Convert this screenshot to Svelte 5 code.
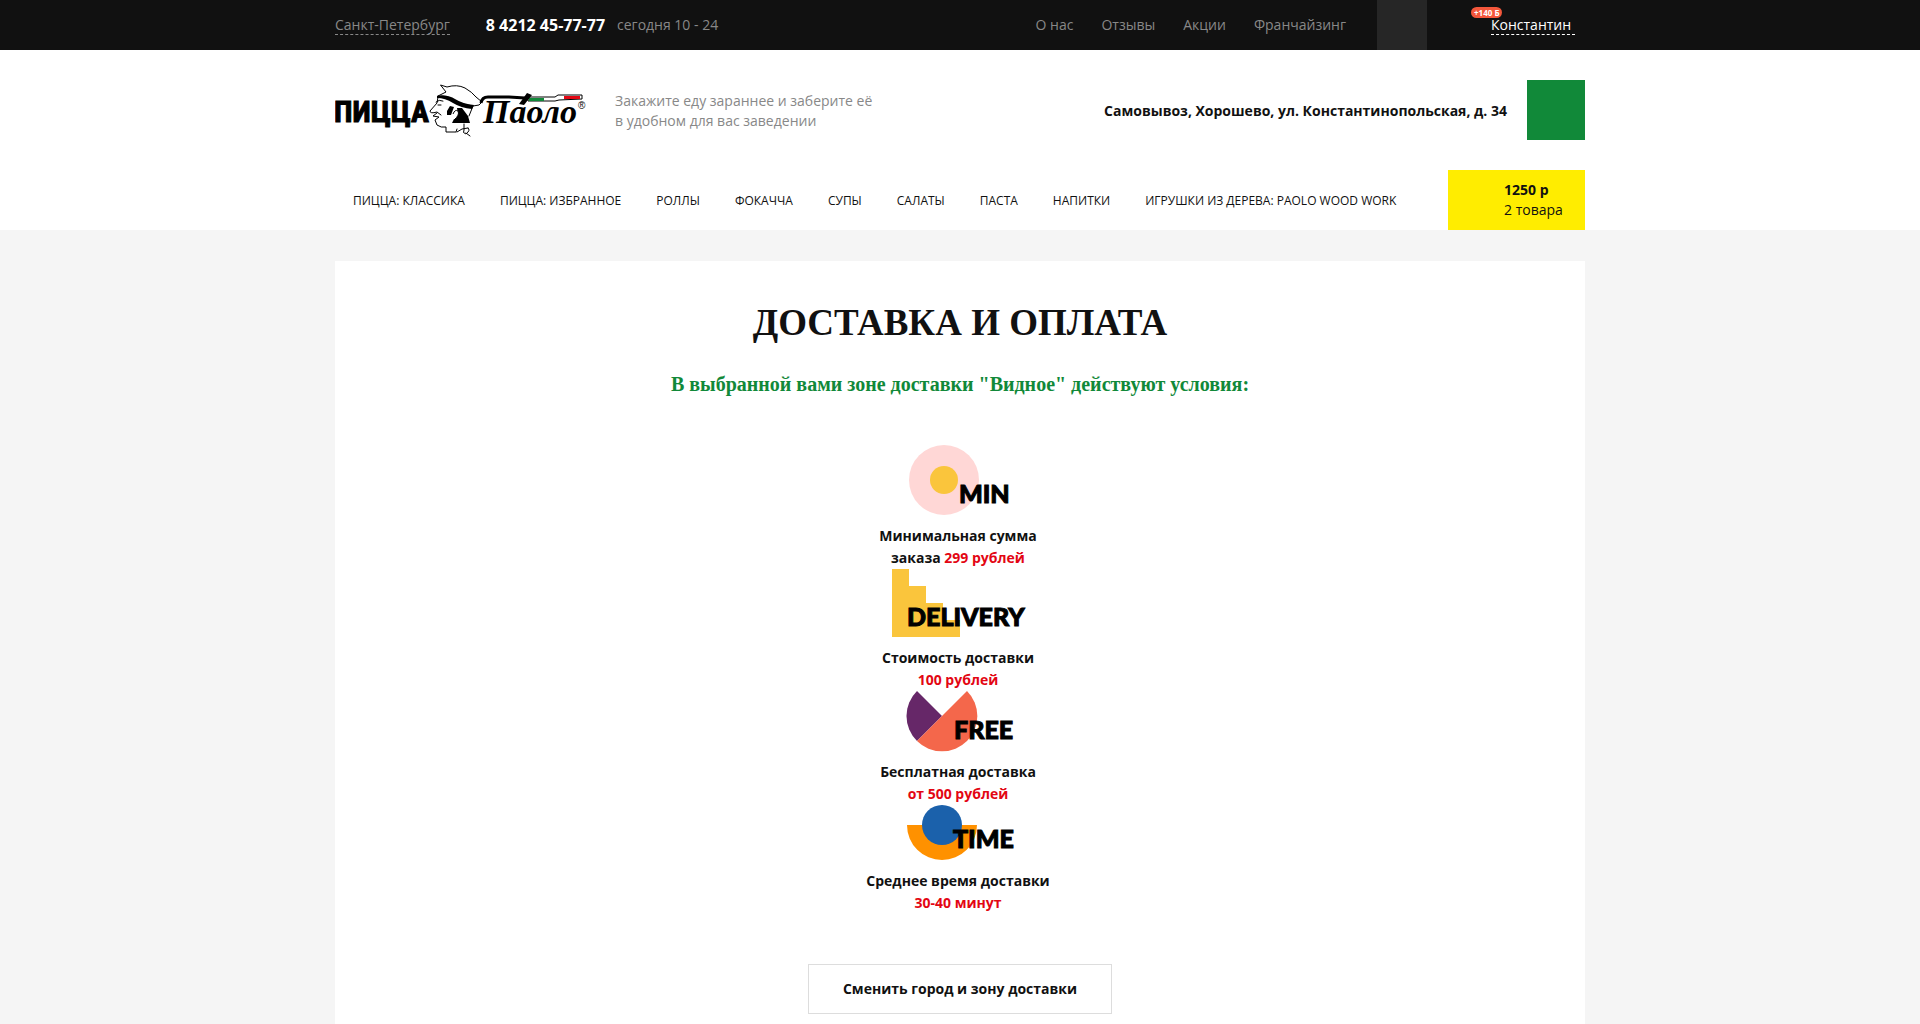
<script>
  const topLinks = ['О нас', 'Отзывы', 'Акции', 'Франчайзинг'];
  const categories = [
    'Пицца: классика', 'Пицца: избранное', 'Роллы', 'Фокачча', 'Супы',
    'Салаты', 'Паста', 'Напитки', 'Игрушки из дерева: Paolo Wood Work'
  ];
</script>

<div class="page">
  <div class="topbar">
    <div class="wrap topbar-row">
      <button class="dashed city">Санкт-Петербург</button>
      <a class="phone" href="tel:84212457777">8 4212 45-77-77</a>
      <span class="hours">сегодня 10 - 24</span>
      <nav class="top-links" aria-label="О компании">
        {#each topLinks as link}
          <a href="#top">{link}</a>
        {/each}
      </nav>
      <button class="search" aria-label="Поиск"></button>
      <div class="user">
        <a class="dashed user-name" href="#profile">Константин</a>
        <span class="bonus">+140 Б</span>
      </div>
    </div>
  </div>

  <header class="header">
    <div class="wrap brand-row">
      <a class="logo" href="#home" aria-label="Пицца Паоло">
        <svg width="252" height="54" viewBox="0 0 252 54">
          <text class="logo-block" x="-1" y="39">ПИЦЦА</text>
          <g fill="none" stroke="#000" stroke-width="1" stroke-linejoin="round" stroke-linecap="round">
            <path fill="#fff" d="M103 13 L111 9 L105.5 2 L112 4 Q122 1 130 5 Q137 9 141 14 L147 19 L144 22 L138 23 Q127 22 119 17 Q112 12 103 13Z" />
            <path d="M103 14 L102 20 L95 28 Q95 31 102 29 L106 32 M102 30 L98 33 L104 34 L100 37 L102 42 Q106 45 111 44 L111 49 L121 49 L122 46" />
            <path d="M101 19 Q104 16 108 18 M103 22 L106 22" />
            <path d="M138 23 L134 33 M122 49 L127 46 L133 45 M129 41 V47 Q127 50 131 51 Q136 47 133 45 M131 50 L135 53" />
          </g>
          <path d="M102 13 Q113 11 120 16 Q128 21 139 22 L137 26 Q126 25 118 20 Q110 15 102 15Z" />
          <path d="M112 28 L115 23 L119 24 L116 32 L112 32Z M122 25 L127 25 L133 33 L135 40 H117 L119 36 Q124 33 122 25Z" />
          <path fill="#fff" stroke="#000" d="M118 31 Q120 26 123 28 Q125 32 119 37" />
          <path fill="none" stroke="#000" stroke-width="3" d="M146 20 Q147 14 153 14 H174 L190 15" />
          <path fill="#fff" stroke="#000" d="M193 14 H220 L223 12 H247 V16 L224 17 L220 18 H193Z" />
          <path fill="#118939" d="M194 15 H209 V18 H194Z" />
          <path fill="#e30613" d="M229 13 H245 V16 H229Z" />
          <path d="M184 21 L192 10 L197 12 L189 22Z" />
          <text class="logo-script" x="148" y="40">Паоло</text>
          <text class="logo-mark" x="243" y="26">®</text>
        </svg>
      </a>
      <p class="tagline">Закажите еду зараннее и заберите её<br />в удобном для вас заведении</p>
      <strong class="address">Самовывоз, Хорошево, ул. Константинопольская, д. 34</strong>
      <button class="place" aria-label="Изменить адрес"></button>
    </div>
    <div class="wrap menu-row">
      <nav class="menu" aria-label="Меню">
        {#each categories as category}
          <a href="#menu">{category}</a>
        {/each}
      </nav>
      <a class="cart" href="#cart"><strong>1250 р</strong><span>2 товара</span></a>
    </div>
  </header>

  <main class="wrap card">
    <h1>ДОСТАВКА И ОПЛАТА</h1>
    <h2>В выбранной вами зоне доставки "Видное" действуют условия:</h2>

    <section class="terms">
      <div class="term">
        <svg width="140" height="70" viewBox="0 0 140 70">
          <circle cx="54" cy="35" r="35" fill="#ffd7d6" />
          <circle cx="54" cy="35" r="14" fill="#fac53c" />
          <text x="69" y="58">MIN</text>
        </svg>
        <p>Минимальная сумма<br />заказа <em>299 рублей</em></p>
      </div>
      <div class="term">
        <svg width="140" height="68" viewBox="0 0 140 68">
          <path fill="#fac53c" d="M2 0H19V17H36V34H53V51H70V68H2Z" />
          <text x="17" y="57">DELIVERY</text>
        </svg>
        <p>Стоимость доставки<br /><em>100 рублей</em></p>
      </div>
      <div class="term">
        <svg width="140" height="60" viewBox="0 0 140 60">
          <path fill="#662768" d="M52 25 L27 0 A35 35 0 0 0 27 50Z" />
          <path fill="#f4674b" d="M52 25 L77 0 A35 35 0 0 1 27 50Z" />
          <text x="64" y="48">FREE</text>
        </svg>
        <p>Бесплатная доставка<br /><em>от 500 рублей</em></p>
      </div>
      <div class="term">
        <svg width="140" height="55" viewBox="0 0 140 55">
          <path fill="#ff9100" d="M17 20H87A35 35 0 0 1 17 20Z" />
          <circle cx="52" cy="20" r="20" fill="#1b61ab" />
          <text x="63" y="43">TIME</text>
        </svg>
        <p>Среднее время доставки<br /><em>30-40 минут</em></p>
      </div>
    </section>

    <button class="change">Сменить город и зону доставки</button>
  </main>
</div>

<style>
  :global(body) { background: #f5f5f5; }
  .page {
    display: flex;
    flex-direction: column;
    min-height: 100vh;
    font: 14px/20px "Open Sans", "Noto Sans", sans-serif;
    color: #111;
  }
  a { color: inherit; text-decoration: none; }
  button { font: inherit; color: inherit; background: none; border: 0; padding: 0; cursor: pointer; }
  p, h1, h2 { margin: 0; }
  .wrap { width: 100%; max-width: 1250px; margin: 0 auto; }

  .topbar { background: #111; color: #888; }
  .topbar-row { display: flex; align-items: center; height: 50px; }
  .dashed { border-bottom: 1px dashed currentColor; line-height: 19px; }
  .phone { margin-left: 36px; font-size: 16px; font-weight: 700; color: #fff; }
  .hours { margin-left: 12px; }
  .top-links { display: flex; gap: 28px; margin-left: auto; }
  .search { width: 50px; height: 50px; margin-left: 31px; background: #262626; }
  .user { position: relative; min-width: 84px; margin-left: 64px; margin-right: 10px; color: #fff; }
  .user-name { display: block; }
  .bonus {
    position: absolute;
    left: -20px;
    top: -8px;
    padding: 0 3px;
    border-radius: 6px;
    background: #f4573b;
    font-size: 8px;
    line-height: 11px;
    font-weight: 700;
    white-space: nowrap;
  }

  .header { background: #fff; }
  .brand-row { display: flex; align-items: center; padding: 30px 0; }
  .logo { display: block; height: 54px; }
  .logo-block { font: 700 30px "Liberation Sans Narrow", "Roboto Condensed", "Liberation Sans", sans-serif; stroke: #000; stroke-width: 1px; }
  .logo-script { font: italic 700 34px "Liberation Serif", serif; }
  .logo-mark { font: 10px "Liberation Sans", sans-serif; }
  .tagline { margin-left: 28px; padding-top: 2px; color: #888; }
  .address { margin-left: auto; padding-top: 2px; }
  .place { width: 58px; height: 60px; margin-left: 20px; background: #118939; }
  .menu-row { display: flex; justify-content: space-between; }
  .menu { display: flex; align-items: center; gap: 35px; padding: 2px 0 0 18px; font-size: 12px; text-transform: uppercase; white-space: nowrap; }
  .cart {
    display: flex;
    flex-direction: column;
    justify-content: center;
    box-sizing: border-box;
    width: 137px;
    height: 60px;
    padding-left: 56px;
    background: #ffed00;
  }

  .card {
    display: flex;
    flex: 1;
    flex-direction: column;
    align-items: center;
    box-sizing: border-box;
    margin-top: 31px;
    padding: 40px 24px 10px;
    background: #fff;
    text-align: center;
  }
  h1 { font: 700 37px/44px "Liberation Serif", serif; }
  h2 { margin-top: 28px; font: 700 20px/22px "Liberation Serif", serif; color: #118939; }
  .terms { margin-top: 50px; font-weight: 700; line-height: 22px; }
  .term svg { display: block; margin: 0 auto 10px; overflow: visible; }
  .term p { padding-right: 4px; }
  .term text { font: 900 25px Lato, sans-serif; stroke: #000; stroke-width: 1px; }
  em { font-style: normal; color: #e30613; }
  .change {
    box-sizing: border-box;
    height: 50px;
    margin-top: 50px;
    padding: 0 34px;
    border: 1px solid #ddd;
    font-weight: 700;
  }
</style>
